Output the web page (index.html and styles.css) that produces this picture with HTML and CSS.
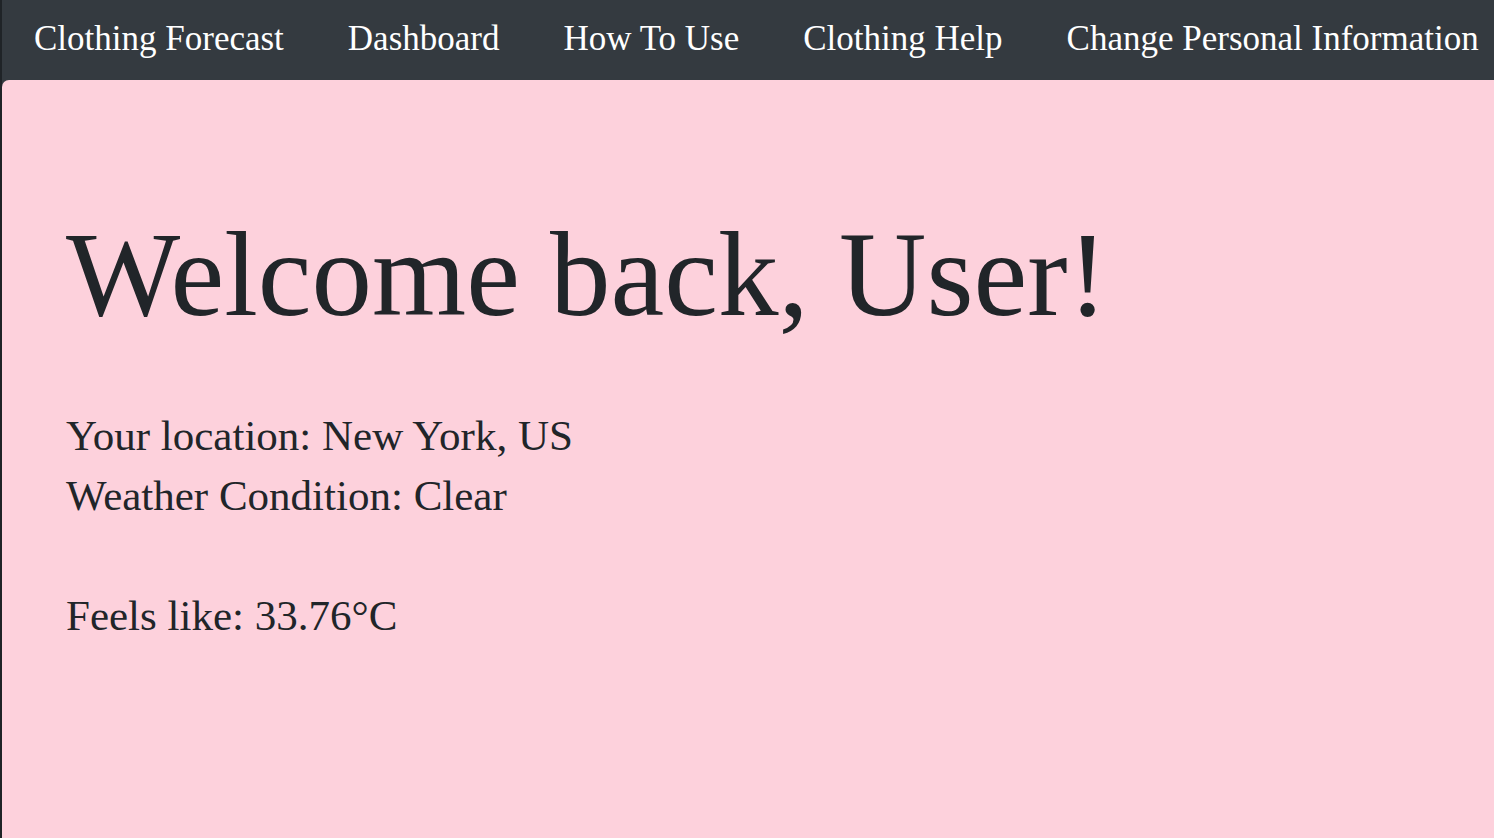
FILE: index.html
```html
<!DOCTYPE html>
<html lang="en">
<head>
<meta charset="utf-8">
<title>Clothing Forecast</title>
<link rel="stylesheet" href="styles.css">
</head>
<body>
<nav class="topnav">
  <a class="nav-link" href="#">Clothing Forecast</a>
  <a class="nav-link" href="#">Dashboard</a>
  <a class="nav-link" href="#">How To Use</a>
  <a class="nav-link" href="#">Clothing Help</a>
  <a class="nav-link" href="#">Change Personal Information</a>
</nav>
<main class="panel">
  <h1 class="welcome">Welcome back, User!</h1>
  <p class="info">Your location: New York, US<br>Weather Condition: Clear</p>
  <p class="info">Feels like: 33.76°C</p>
</main>
</body>
</html>
```
FILE: styles.css
```css
html, body {
  margin: 0;
  height: 100%;
}
body {
  background: #343a40;
  border-left: 2px solid #1f2327;
  box-sizing: border-box;
  font-family: "Liberation Serif", "Times New Roman", serif;
  color: #212529;
  overflow: hidden;
  display: flex;
  flex-direction: column;
}
.topnav {
  height: 80px;
  box-sizing: border-box;
  padding: 0 0 2px 32px;
  flex: none;
  display: flex;
  align-items: center;
  gap: 64px;
  white-space: nowrap;
}
.nav-link {
  color: #ffffff;
  text-decoration: none;
  font-size: 35px;
}
.panel {
  flex: 1;
  background: #fdd1dc;
  border-top-left-radius: 7px;
  padding: 122px 64px 0;
}
.welcome {
  margin: 0 0 60px;
  font-weight: 400;
  font-size: 121px;
  line-height: 144px;
}
.info {
  margin: 0 0 60px;
  font-size: 43px;
  line-height: 60px;
}
```
